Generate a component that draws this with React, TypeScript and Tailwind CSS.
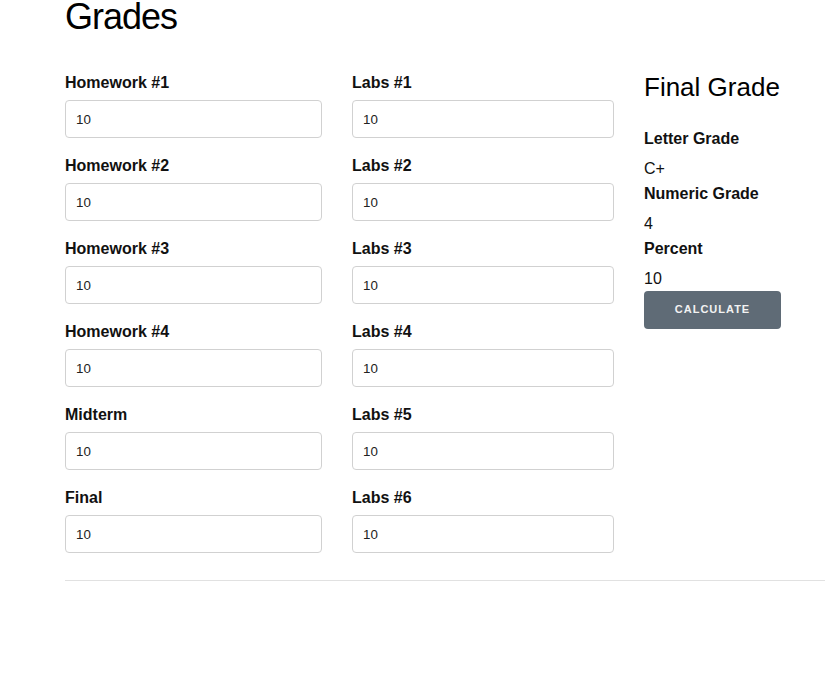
import React from "react";

const left = ["Homework #1", "Homework #2", "Homework #3", "Homework #4", "Midterm", "Final"];
const mid = ["Labs #1", "Labs #2", "Labs #3", "Labs #4", "Labs #5", "Labs #6"];

function Field({ label }: { label: string }) {
  return (
    <div className="flex flex-col">
      <label className="block text-[16px] leading-[25px] font-bold text-[#111] mb-[5px]">{label}</label>
      <input
        defaultValue="10"
        className="h-[38px] w-full mb-[15px] border border-[#d1d1d1] rounded-[4px] px-[10px] text-[13.33px] text-[#222] bg-white outline-none"
        style={{ fontFamily: '"Liberation Sans", Arial, sans-serif' }}
      />
    </div>
  );
}

export default function App() {
  return (
    <div
      className="w-[836px] h-[679px] bg-white overflow-hidden"
      style={{ fontFamily: '"Liberation Sans", Arial, sans-serif' }}
    >
      <div className="ml-[65px] w-[760px]">
        <h1 className="text-[36px] leading-[33px] tracking-[-1px] font-normal text-black mb-[37px]">Grades</h1>
        <div className="grid grid-cols-[257px_262px_1fr] gap-x-[30px]">
          <div className="flex flex-col">
            {left.map((l) => (
              <Field key={l} label={l} />
            ))}
          </div>
          <div className="flex flex-col">
            {mid.map((l) => (
              <Field key={l} label={l} />
            ))}
          </div>
          <div className="flex flex-col items-start">
            <h3 className="text-[26px] leading-[34px] font-normal text-black mb-[22px]">Final Grade</h3>
            <div className="text-[16px] leading-[25.6px] font-bold text-[#111] mb-[4px]">Letter Grade</div>
            <div className="text-[16px] leading-[25.6px] text-[#111]">C+</div>
            <div className="text-[16px] leading-[25.6px] font-bold text-[#111] mb-[4px]">Numeric Grade</div>
            <div className="text-[16px] leading-[25.6px] text-[#111]">4</div>
            <div className="text-[16px] leading-[25.6px] font-bold text-[#111] mb-[4px]">Percent</div>
            <div className="text-[16px] leading-[25.6px] text-[#111]">10</div>
            <button className="mt-[-1px] h-[38px] w-[137px] rounded-[4px] bg-[#5f6b76] text-[#f2f2f2] text-[11px] font-bold tracking-[1px] uppercase">
              Calculate
            </button>
          </div>
        </div>
        <hr className="mt-[12px] border-0 border-t border-[#e1e1e1]" />
      </div>
    </div>
  );
}
